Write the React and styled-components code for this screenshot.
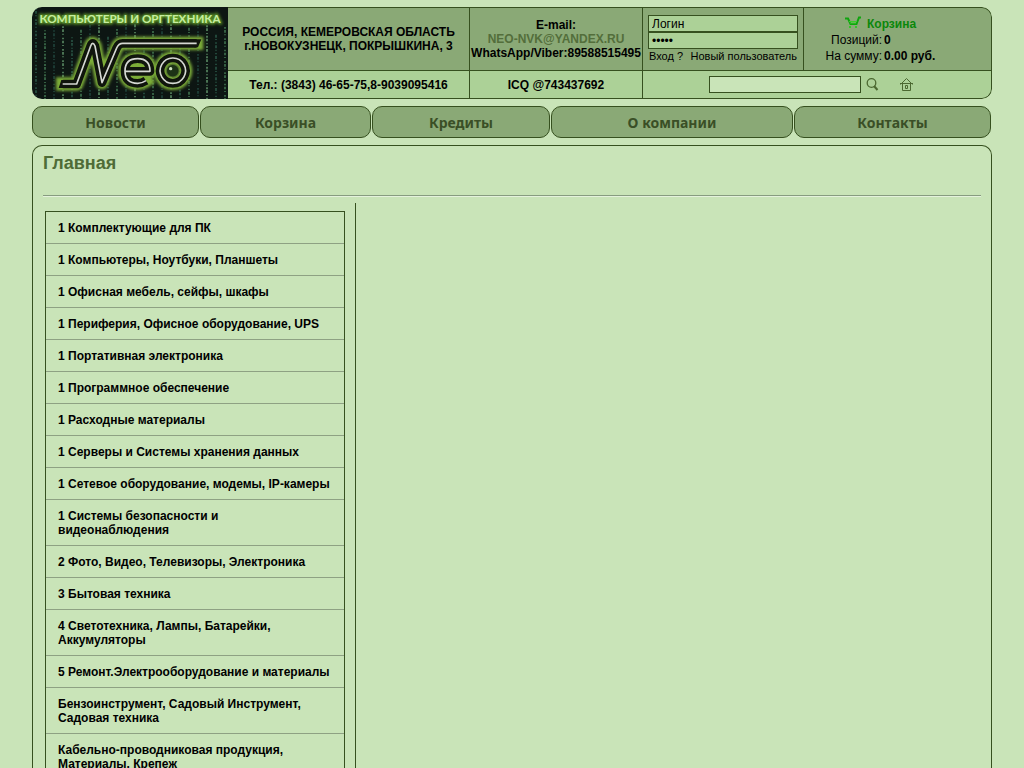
import styled, { createGlobalStyle } from "styled-components";

const GlobalStyle = createGlobalStyle`
  * {
    box-sizing: border-box;
  }
  body {
    margin: 0;
    background: #c9e4b8;
    color: #000;
    font: 12px/14px "Liberation Sans", Arial, sans-serif;
  }
  a {
    color: inherit;
    text-decoration: none;
  }
`;

const Page = styled.div`
  display: flex;
  flex-direction: column;
  gap: 7px;
  padding: 7px 32px 0;
`;
const Header = styled.header`
  display: grid;
  grid-template-columns: 196px 242px 173px 1fr;
  grid-template-rows: 64px 28px;
  border-radius: 10px;
  overflow: hidden;
`;
const LogoLink = styled.a`
  grid-row: 1 / 3;
  svg {
    display: block;
  }
`;
const Cell = styled.div`
  display: flex;
  flex-direction: column;
  justify-content: center;
  background: ${(props) => (props.$light ? "#acd197" : "#8aa976")};
  border: solid #36501f;
  border-width: ${(props) => (props.$light ? "0 1px 1px 0" : "1px 1px 1px 0")};
  font-weight: bold;
  text-align: center;
  white-space: nowrap;
`;
const MailLink = styled.a`
  color: #536e3b;
`;
const TopRight = styled.div`
  display: grid;
  grid-template-columns: 161px 1fr;
`;
const LoginForm = styled.form`
  display: flex;
  flex-direction: column;
  padding: 7px 5px 0;
  background: #8aa976;
  border: solid #36501f;
  border-width: 1px 1px 1px 0;
`;
const LoginInput = styled.input`
  width: 100%;
  height: 17px;
  padding: 0 3px;
  background: #acd197;
  border: 1px solid #36501f;
  color: #000;
  font: 12px/14px "Liberation Sans", Arial, sans-serif;
`;
const LoginLinks = styled.div`
  display: flex;
  justify-content: space-between;
  align-items: center;
  height: 14px;
  padding: 0 1px;
  font-size: 11px;
  white-space: nowrap;
`;
const LoginButton = styled.button`
  padding: 0;
  border: 0;
  background: none;
  color: inherit;
  font: inherit;
`;
const Cart = styled.div`
  padding: 8px 0 0 20px;
  background: #8aa976;
  border: solid #36501f;
  border-width: 1px 1px 1px 0;
  border-top-right-radius: 10px;
`;
const CartTitle = styled.a`
  display: flex;
  gap: 6px;
  padding-left: 21px;
  color: #0b870b;
  font-weight: bold;
  line-height: 16px;
`;
const CartRow = styled.div`
  display: grid;
  grid-template-columns: 58px auto;
  gap: 2px;
  line-height: 16px;
  span {
    text-align: right;
  }
`;
const SearchForm = styled.form`
  display: flex;
  align-items: center;
  padding-left: 66px;
  background: #acd197;
  border: solid #36501f;
  border-width: 0 1px 1px 0;
  border-bottom-right-radius: 10px;
`;
const SearchInput = styled.input`
  width: 152px;
  height: 17px;
  padding: 0 3px;
  background: #c9e4b8;
  border: 1px solid #36501f;
`;
const SearchButton = styled.button`
  display: flex;
  margin: 0 21px 0 5px;
  padding: 0;
  border: 0;
  background: none;
`;
const HomeLink = styled.a`
  display: flex;
`;

const Nav = styled.nav`
  display: grid;
  grid-template-columns: 168fr 172fr 179fr 243fr 198fr;
`;
const NavLink = styled.a`
  height: 32px;
  margin-right: 1px;
  background: #8aa976;
  border: 1px solid #36501f;
  border-radius: 10px;
  color: #3a4f26;
  font: bold 14px/32px "Noto Sans", Tahoma, sans-serif;
  text-align: center;
`;

const Main = styled.main`
  padding: 7px 10px 0;
  border: 1px solid #36501f;
  border-bottom: 0;
  border-radius: 10px 10px 0 0;
`;
const Title = styled.h1`
  margin: 0;
  color: #4f6c37;
  font-size: 18px;
  line-height: 20px;
`;
const Divider = styled.hr`
  height: 2px;
  margin: 22px 0 6px;
  border: 0;
  border-top: 1px solid #879c80;
  border-bottom: 1px solid #e4f2dc;
`;
const Columns = styled.div`
  display: grid;
  grid-template-columns: 313px 1fr;
`;
const Sidebar = styled.aside`
  padding: 8px 10px 8px 2px;
  border-right: 1px solid #36501f;
`;
const Menu = styled.ul`
  margin: 0;
  padding: 0;
  border: 1px solid #36501f;
  list-style: none;
`;
const MenuItem = styled.li`
  padding: 9px 12px 8px;
  font-weight: bold;
  & + & {
    border-top: 1px solid #8ea183;
  }
`;

const categories = [
  "1 Комплектующие для ПК",
  "1 Компьютеры, Ноутбуки, Планшеты",
  "1 Офисная мебель, сейфы, шкафы",
  "1 Периферия, Офисное оборудование, UPS",
  "1 Портативная электроника",
  "1 Программное обеспечение",
  "1 Расходные материалы",
  "1 Серверы и Системы хранения данных",
  "1 Сетевое оборудование, модемы, IP-камеры",
  "1 Системы безопасности и видеонаблюдения",
  "2 Фото, Видео, Телевизоры, Электроника",
  "3 Бытовая техника",
  "4 Светотехника, Лампы, Батарейки, Аккумуляторы",
  "5 Ремонт.Электрооборудование и материалы",
  "Бензоинструмент, Садовый Инструмент, Садовая техника",
  "Кабельно-проводниковая продукция, Материалы, Крепеж",
];

const navItems = ["Новости", "Корзина", "Кредиты", "О компании", "Контакты"];

const rain = Array.from({ length: 22 }, (_, i) => ({
  x: 36 + i * 27,
  y: 24 + ((i * 67) % 90),
  dash: ["5 4 8 5 3 9", "3 5 6 3 8 6", "9 4 3 7 4 5"][i % 3],
  color: ["#22473a", "#345f42", "#1b3a33", "#4a7353"][i % 4],
}));

const letters = [
  "M116 252H158L200 138Q206 122 213 138L234 248L278 144Q284 130 296 130H518",
  "M302 214H378Q378 176 341 176Q303 176 303 213Q303 250 341 250Q354 250 366 242",
  "M446 174A38 38 0 1 0 447 174Z",
];

function Logo() {
  return (
    <svg width="196" height="92" viewBox="24 21 588 276">
      <defs>
        <filter id="glow" filterUnits="userSpaceOnUse" x="24" y="21" width="588" height="276">
          <feGaussianBlur stdDeviation="4" />
        </filter>
      </defs>
      <rect x="24" y="21" width="588" height="276" fill="#0d1613" />
      {rain.map((r) => (
        <path
          key={r.x}
          d={`M${r.x} ${r.y}V297`}
          stroke={r.color}
          strokeWidth="6"
          strokeDasharray={r.dash}
        />
      ))}
      <g fill="none" strokeLinejoin="round">
        {letters.map((d) => (
          <path key={d} d={d} stroke="#7dad38" strokeWidth="40" strokeLinecap="square" filter="url(#glow)" />
        ))}
        {letters.map((d) => (
          <path key={d} d={d} stroke="#10150d" strokeWidth="26" />
        ))}
        <path d="M104 264L112 240H124V264ZM510 118H532L522 142H510Z" fill="#10150d" />
        {letters.map((d) => (
          <path key={d} d={d} stroke="#d5d8d2" strokeWidth="5" />
        ))}
      </g>
      <circle cx="446" cy="212" r="17" fill="#1d3316" />
      <circle cx="440" cy="206" r="5" fill="#cfe3bd" />
      <g fontFamily="Lato, sans-serif" fontWeight="bold" fontSize="35" textAnchor="middle">
        <text x="318" y="69" fill="#5f9a28" stroke="#5f9a28" strokeWidth="8" filter="url(#glow)" aria-hidden="true">
          КОМПЬЮТЕРЫ И ОРГТЕХНИКА
        </text>
        <text x="318" y="69" fill="#c6eda0">
          КОМПЬЮТЕРЫ И ОРГТЕХНИКА
        </text>
      </g>
    </svg>
  );
}

function CartIcon() {
  return (
    <svg width="16" height="14" viewBox="0 0 16 14" fill="none">
      <path d="M0 2.5H3L5.5 8H11.5L14 1.5H16" stroke="#0fa50f" strokeWidth="2" />
      <path d="M4 5.5H12M5 7H11" stroke="#3ccc2c" />
      <path d="M4 10H6V12H4ZM10 10H12V12H10Z" fill="#35c72a" />
    </svg>
  );
}

function SearchIcon() {
  return (
    <svg width="13" height="13" viewBox="0 0 13 13" fill="none" stroke="#4c6931">
      <circle cx="5.5" cy="5" r="4.3" strokeWidth="1.3" />
      <path d="M8 8L11.5 12" strokeWidth="2" />
    </svg>
  );
}

function HomeIcon() {
  return (
    <svg width="13" height="14" viewBox="0 0 13 14" fill="none" stroke="#4c6931">
      <path d="M0.5 6.5L6.5 0.5L12.5 6.5M0 5.5H13M2.5 5.5V12.5H10.5V5.5" />
      <path d="M5.5 7.5H7.5V10.5H5.5Z" />
    </svg>
  );
}

export default function App() {
  return (
    <>
      <GlobalStyle />
      <Page>
        <Header>
          <LogoLink href="#" aria-label="Neo">
            <Logo />
          </LogoLink>
          <Cell>
            <div>РОССИЯ, КЕМЕРОВСКАЯ ОБЛАСТЬ</div>
            <div>г.НОВОКУЗНЕЦК, ПОКРЫШКИНА, 3</div>
          </Cell>
          <Cell>
            <div>E-mail:</div>
            <MailLink href="mailto:NEO-NVK@YANDEX.RU">NEO-NVK@YANDEX.RU</MailLink>
            <div>WhatsApp/Viber:89588515495</div>
          </Cell>
          <TopRight>
            <LoginForm>
              <LoginInput aria-label="Логин" defaultValue="Логин" />
              <LoginInput aria-label="Пароль" type="password" defaultValue="12345" />
              <LoginLinks>
                <span>
                  <LoginButton type="button">Вход</LoginButton> <a href="#">?</a>
                </span>
                <a href="#">Новый пользователь</a>
              </LoginLinks>
            </LoginForm>
            <Cart>
              <CartTitle href="#">
                <CartIcon />
                Корзина
              </CartTitle>
              <CartRow>
                <span>Позиций:</span>
                <b>0</b>
              </CartRow>
              <CartRow>
                <span>На сумму:</span>
                <b>0.00 руб.</b>
              </CartRow>
            </Cart>
          </TopRight>
          <Cell $light>Тел.: (3843) 46-65-75,8-9039095416</Cell>
          <Cell $light>ICQ @743437692</Cell>
          <SearchForm>
            <SearchInput aria-label="Поиск" />
            <SearchButton type="button" aria-label="Найти">
              <SearchIcon />
            </SearchButton>
            <HomeLink href="#" aria-label="Главная">
              <HomeIcon />
            </HomeLink>
          </SearchForm>
        </Header>
        <Nav>
          {navItems.map((item) => (
            <NavLink href="#" key={item}>
              {item}
            </NavLink>
          ))}
        </Nav>
        <Main>
          <Title>Главная</Title>
          <Divider />
          <Columns>
            <Sidebar>
              <Menu>
                {categories.map((name) => (
                  <MenuItem key={name}>
                    <a href="#">{name}</a>
                  </MenuItem>
                ))}
              </Menu>
            </Sidebar>
          </Columns>
        </Main>
      </Page>
    </>
  );
}
